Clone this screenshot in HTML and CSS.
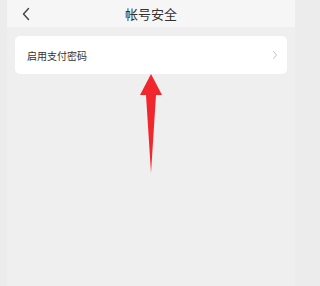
FILE: index.html
```html
<!DOCTYPE html>
<html lang="zh">
<head>
<meta charset="utf-8">
<link rel="stylesheet" href="styles.css">
</head>
<body>
<div class="frame">
  <div class="page">
    <header class="nav">
      <svg class="back" width="10" height="14" viewBox="0 0 10 14"><path d="M7.5 1.5 L2.5 7 L7.5 12.5" fill="none" stroke="#444" stroke-width="1.4" stroke-linecap="round" stroke-linejoin="round"/></svg>
      <div class="title">帐号安全</div>
    </header>
    <main class="content">
      <div class="card">
        <span class="label">启用支付密码</span>
        <svg class="chev" width="6" height="10" viewBox="0 0 6 10"><path d="M1.5 1.5 L4.5 5 L1.5 8.5" fill="none" stroke="#c4c4c4" stroke-width="1" stroke-linecap="round" stroke-linejoin="round"/></svg>
      </div>
      <svg class="arrow" width="30" height="100" viewBox="0 0 30 100"><path d="M15 0 L26 21 L20 21 L15 99 L10 21 L4 21 Z" fill="#f0272d"/></svg>
    </main>
  </div>
</div>
</body>
</html>
```
FILE: styles.css
```css
html, body {
  margin: 0;
  padding: 0;
}
body {
  width: 295px;
  height: 286px;
  overflow: hidden;
  background: #ececec;
  font-family: "Noto Sans CJK SC", "Noto Sans", sans-serif;
}
.frame {
  padding-left: 7px;
  height: 286px;
  box-sizing: border-box;
}
.page {
  position: relative;
  height: 100%;
  background: #efefef;
}
.nav {
  position: relative;
  height: 27px;
  background: #f6f6f6;
  display: flex;
  align-items: center;
  justify-content: center;
}
.back {
  position: absolute;
  left: 14px;
  top: 7px;
}
.title {
  font-size: 13px;
  color: #333;
  line-height: 27px;
  margin-left: 0px;
}
.content {
  padding: 9px 8px 0 8px;
}
.card {
  height: 38px;
  background: #fff;
  border-radius: 5px;
  display: flex;
  align-items: center;
  justify-content: space-between;
  padding: 0 9px 0 12px;
}
.label {
  font-size: 10px;
  color: #333;
}
.arrow {
  position: absolute;
  left: 129px;
  top: 74px;
}
```
